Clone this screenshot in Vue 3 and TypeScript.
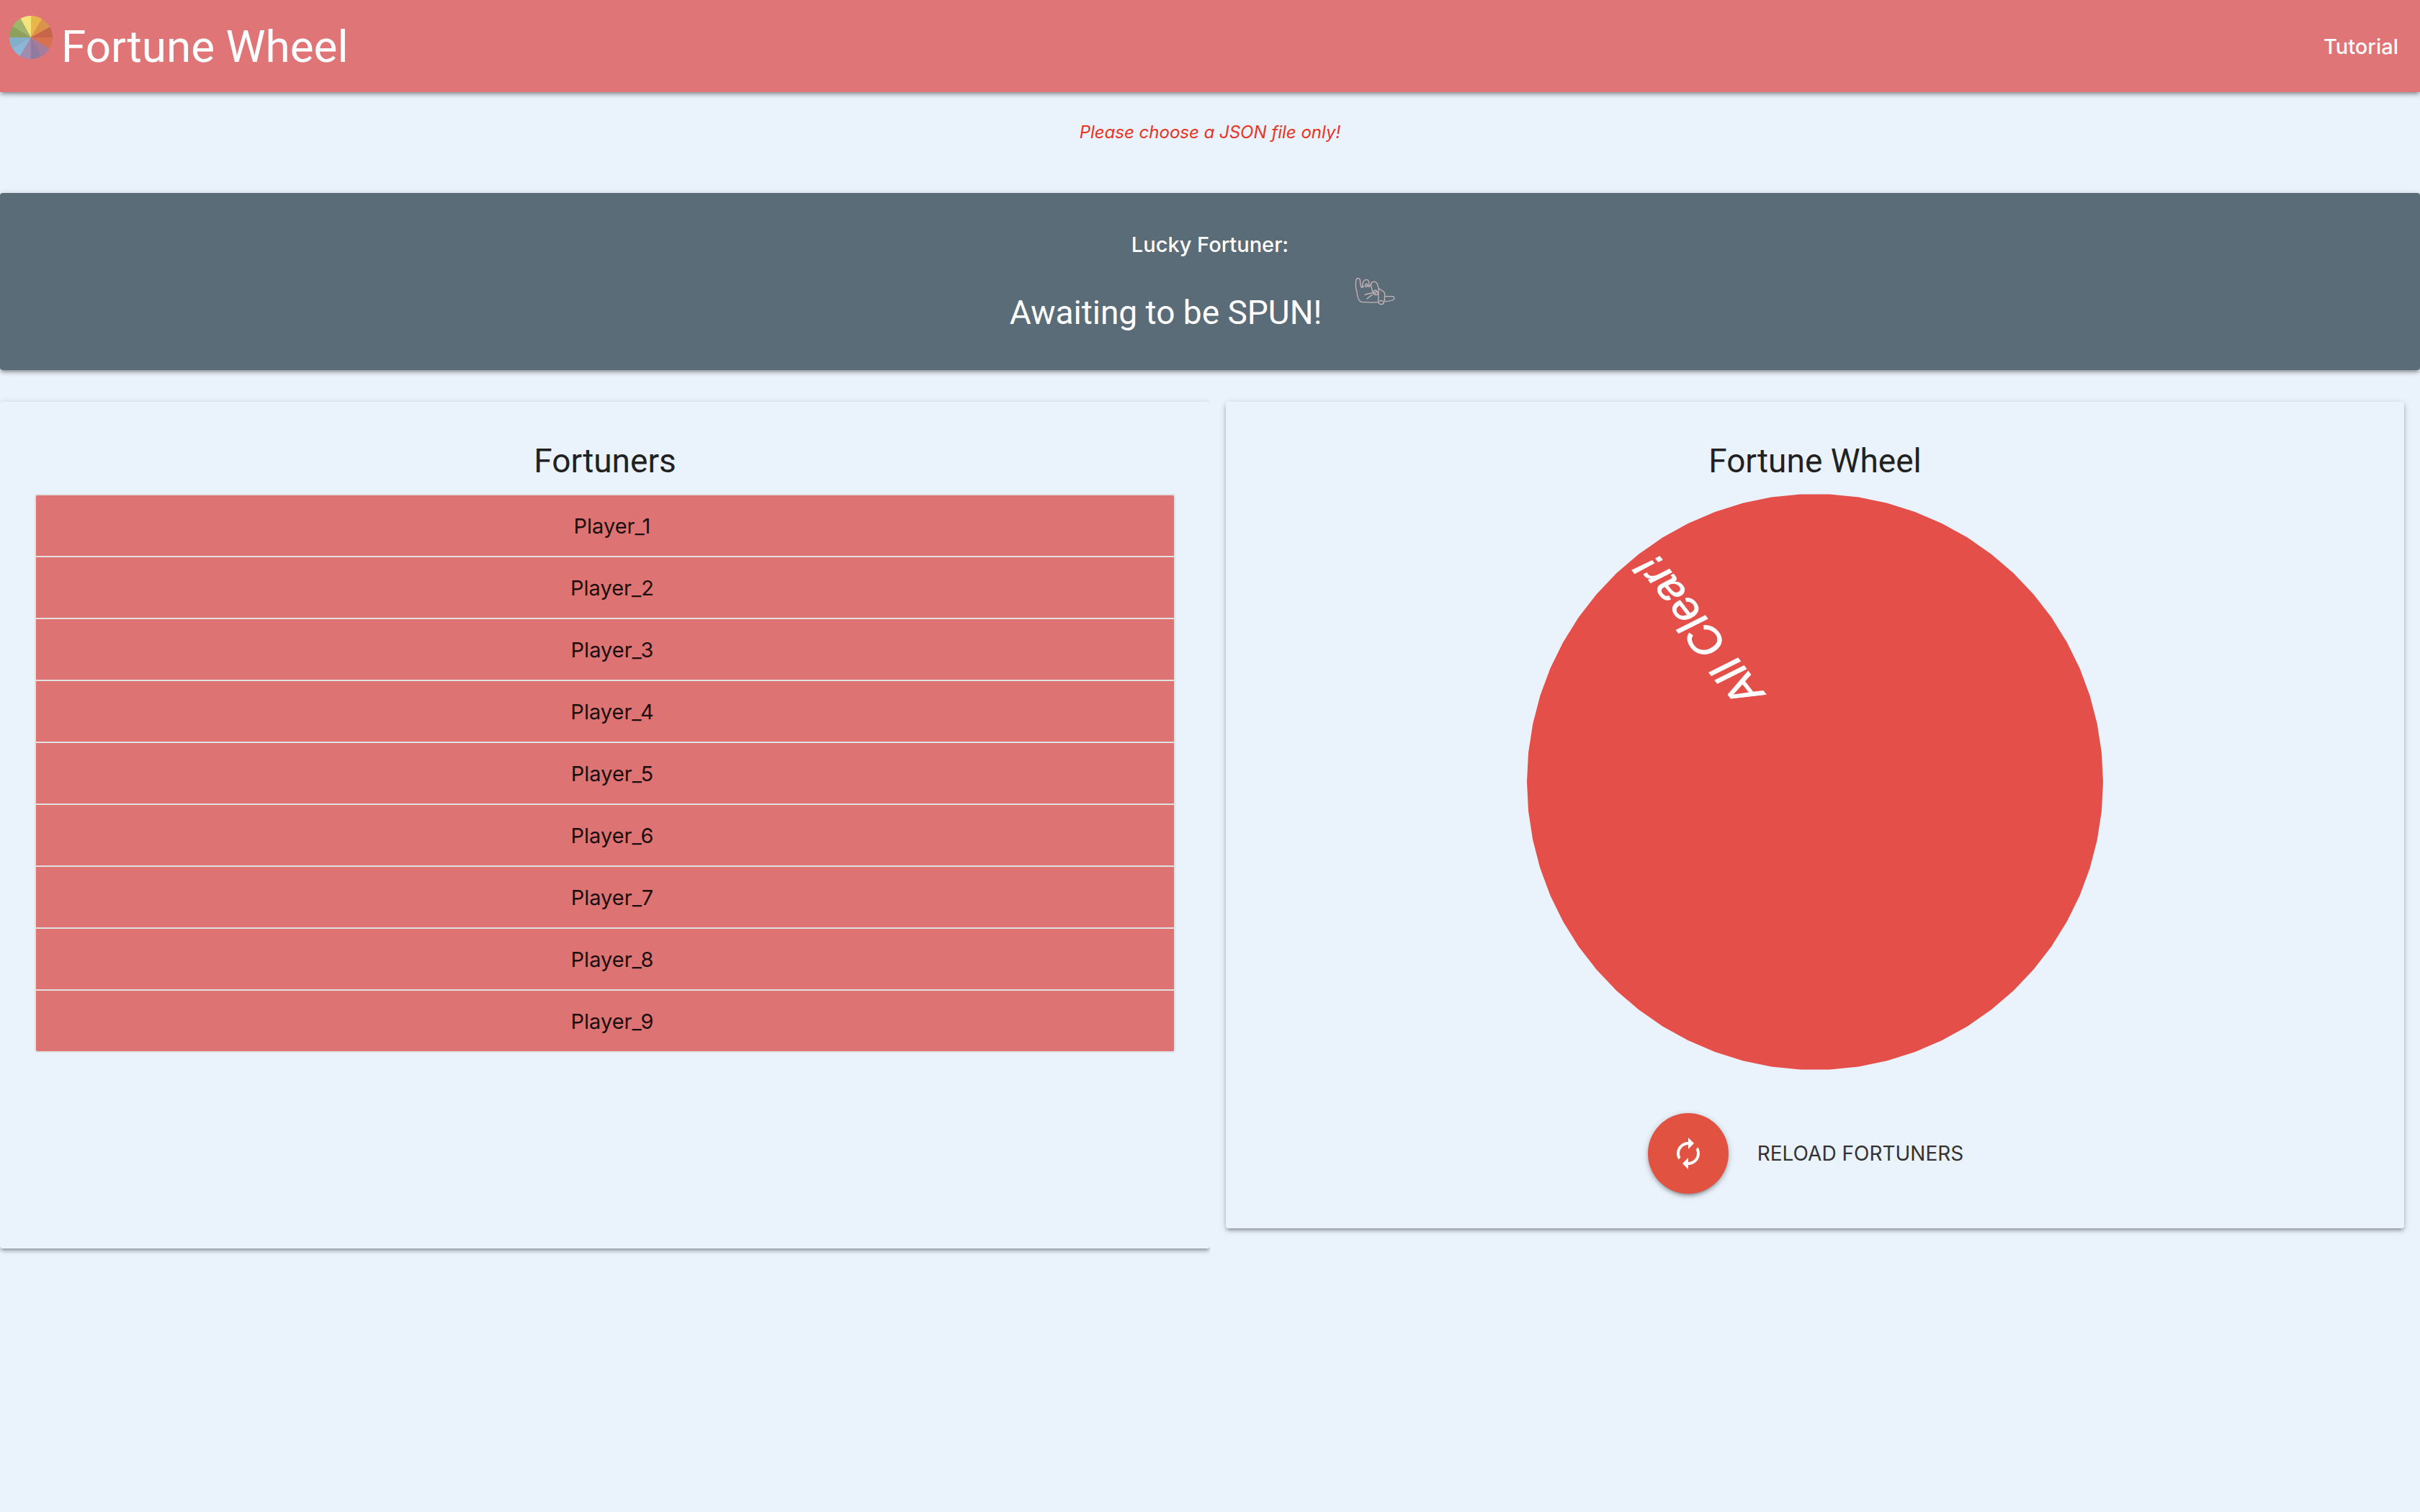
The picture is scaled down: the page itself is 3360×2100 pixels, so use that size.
<script setup lang="ts">
import { ref } from 'vue'

interface Slice {
  d: string
  fill: string
}

const players = ref<string[]>(Array.from({ length: 9 }, (_, i) => `Player_${i + 1}`))

function reload(): void {
  players.value = [...players.value]
}

function point(deg: number, r: number): string {
  const a = (deg * Math.PI) / 180
  return `${(Math.sin(a) * r).toFixed(2)} ${(-Math.cos(a) * r).toFixed(2)}`
}

// Slices of the logo, clockwise from the top
const logoColors: string[] = [
  '#e9b64a', '#d9944a', '#c7654b', '#d9714f', '#a67c9c', '#8f7b9f',
  '#9f8cb0', '#8bb8d6', '#82b0c8', '#8ba15c', '#a0b56c', '#f5e47c',
]
const logoSlices: Slice[] = logoColors.map((fill, i) => ({
  fill,
  d: `M0 0L${point(i * 30 + 1, 30)}A30 30 0 0 1 ${point(i * 30 + 31, 30)}Z`,
}))

const SIDES = 62
const wheelPoints: string = Array.from({ length: SIDES }, (_, i) =>
  point(((i + 0.5) * 360) / SIDES, 400),
).join(' ')
</script>

<template>
  <div class="page">
    <nav class="navbar">
      <a class="brand" href="#">
        <svg class="logo" viewBox="-30 -30 60 60" aria-hidden="true">
          <path v-for="s in logoSlices" :key="s.fill" :d="s.d" :fill="s.fill" />
        </svg>
        <span>Fortune Wheel</span>
      </a>
      <a class="nav-link" href="#tutorial">Tutorial</a>
    </nav>

    <p class="error">Please choose a JSON file only!</p>

    <section class="banner">
      <p class="banner-label">Lucky Fortuner:</p>
      <div class="banner-row">
        <h4 class="heading">Awaiting to be SPUN!</h4>
        <svg class="hand" viewBox="0 0 285 210" aria-hidden="true">
          <path d="M80 148C66 138 64 122 63 104C56 92 58 76 59 58C61 48 73 46 76 56C77 68 76 82 84 90" />
          <path d="M86 88C84 76 88 62 95 57C104 53 113 57 113 66C113 74 115 80 110 84" />
          <path d="M86 88C88 84 90 82 93 84M98 84C94 76 100 70 106 74C112 80 104 88 98 84ZM103 78L107 82" />
          <path d="M110 84C116 86 118 82 121 74C124 62 138 60 146 70C152 78 151 86 153 92C155 110 150 130 153 150" />
          <path d="M121 74C124 86 124 92 128 104C128 116 140 122 150 116C152 106 144 98 136 100C130 104 132 112 138 112C144 110 144 104 140 103" />
          <path d="M153 92C164 98 178 104 179 114C179 126 178 138 178 146" />
          <path d="M80 148C104 150 130 152 153 149" />
          <path d="M153 149C154 160 172 162 175 150C174 142 162 140 157 146M178 146C190 146 206 144 216 138C222 132 218 126 210 125H180" />
          <path d="M94 119C106 114 116 112 126 111M104 136C112 128 120 122 128 118" />
        </svg>
      </div>
    </section>

    <main class="columns">
      <section class="column clipped">
        <div class="card tall">
          <h4 class="heading">Fortuners</h4>
          <ul class="collection">
            <li v-for="p in players" :key="p">{{ p }}</li>
          </ul>
        </div>
      </section>

      <section class="column padded">
        <div class="card">
          <h4 class="heading">Fortune Wheel</h4>
          <svg class="wheel" viewBox="-400 -400 800 800">
            <polygon :points="wheelPoints" />
            <text transform="translate(-70 -124) rotate(-127.6)">All Clear!</text>
          </svg>
          <div class="actions">
            <button id="reload" class="fab" type="button" @click="reload">
              <svg viewBox="0 0 24 24" aria-hidden="true">
                <path d="M12 6v3l4-4-4-4v3c-4.42 0-8 3.58-8 8 0 1.57.46 3.03 1.24 4.26L6.7 14.8c-.45-.83-.7-1.79-.7-2.8 0-3.31 2.69-6 6-6zm6.76 1.74L17.3 9.2c.44.84.7 1.79.7 2.8 0 3.31-2.69 6-6 6v-3l-4 4 4 4v-3c4.42 0 8-3.58 8-8 0-1.57-.46-3.03-1.24-4.26z" />
              </svg>
            </button>
            <label class="action-label" for="reload">RELOAD FORTUNERS</label>
          </div>
        </div>
      </section>
    </main>
  </div>
</template>

<style>
body {
  background: #eaf2fc;
}
</style>

<style scoped>
.page {
  min-height: 100vh;
  background: #eaf2fc;
  color: #212121;
  font-family: Inter, 'Liberation Sans', sans-serif;
  font-size: 29px;
  line-height: 44px;
}

.navbar,
.banner,
.card {
  box-shadow:
    0 4px 4px 0 rgba(0, 0, 0, 0.14),
    0 6px 2px -4px rgba(0, 0, 0, 0.12),
    0 2px 10px 0 rgba(0, 0, 0, 0.2);
}

.navbar {
  box-sizing: border-box;
  display: flex;
  justify-content: space-between;
  align-items: center;
  height: 128px;
  padding: 2px 30px 0 13px;
  background: #df7576;
}

.navbar a {
  color: #fff;
  text-decoration: none;
}

.nav-link {
  font-weight: 500;
}

.brand {
  display: flex;
  align-items: center;
  gap: 12px;
  font-family: Roboto, Inter, sans-serif;
  font-size: 62px;
  line-height: 126px;
}

.logo {
  width: 60px;
  height: 60px;
  margin-bottom: 26px;
}

.error {
  margin: 0;
  padding: 36px 0 64px;
  color: #eb3323;
  font-size: 24px;
  font-style: italic;
  line-height: 40px;
  text-align: center;
}

.banner {
  padding: 50px 48px 46px;
  border-radius: 4px;
  background: #5a6c77;
  color: #fff;
  text-align: center;
}

.banner-label {
  margin: 0;
  font-weight: 500;
}

.banner-row {
  display: flex;
  justify-content: center;
  align-items: flex-start;
  gap: 28px;
  padding-top: 8px;
}

.heading {
  margin: 0;
  font-family: Roboto, Inter, sans-serif;
  font-size: 46px;
  font-weight: 400;
  line-height: 64px;
  text-align: center;
}

.banner .heading {
  padding: 32px 0 2px;
}

.hand {
  width: 95px;
  height: 70px;
  fill: none;
  stroke: #c5b3b6;
  stroke-width: 4;
}

.columns {
  display: flex;
  align-items: flex-start;
  padding-top: 44px;
}

.column {
  box-sizing: border-box;
  width: 50%;
}

.clipped {
  overflow-x: clip;
}

.padded {
  padding: 0 22px;
}

.card {
  padding: 50px 48px 48px;
  border-radius: 4px;
}

.card .heading {
  padding-bottom: 14px;
}

.card.tall {
  padding-bottom: 272px;
}

.collection {
  margin: 0;
  padding: 0;
  overflow: hidden;
  border: 2px solid #e0e0e0;
  border-radius: 4px;
  list-style: none;
}

.collection li {
  padding: 21px 20px 19px 40px;
  background: #dd7473;
  color: #1c0e0e;
  text-align: center;
}

.collection li + li {
  border-top: 2px solid #e0e0e0;
}

.wheel {
  display: block;
  width: 800px;
  max-width: 100%;
  margin: 0 auto;
}

.wheel polygon {
  fill: #e44f49;
}

.wheel text {
  fill: #fff;
  stroke: #fff;
  stroke-width: 1;
  font-family: 'Liberation Sans', Arial, sans-serif;
  font-size: 61px;
  font-style: italic;
}

.actions {
  display: flex;
  justify-content: center;
  align-items: center;
  gap: 8px;
  padding-top: 60px;
}

.fab {
  display: grid;
  place-items: center;
  width: 112px;
  height: 112px;
  padding: 0;
  border: 0;
  border-radius: 50%;
  background: #e15241;
  box-shadow:
    0 4px 4px 0 rgba(0, 0, 0, 0.14),
    0 6px 2px -4px rgba(0, 0, 0, 0.12),
    0 2px 10px 0 rgba(0, 0, 0, 0.2);
}

.fab svg {
  width: 48px;
  height: 48px;
  fill: #fff;
}

.action-label {
  padding: 0 26px 0 32px;
  color: #333;
  font-size: 28px;
}
</style>
